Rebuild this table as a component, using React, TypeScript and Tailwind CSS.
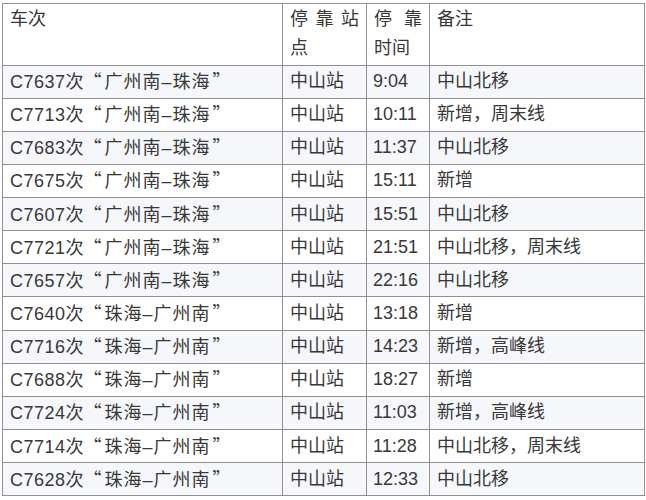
import React from "react";

const rows: [string, string, string, string][] = [
  ["C7637", "广州南–珠海", "9:04", "中山北移"],
  ["C7713", "广州南–珠海", "10:11", "新增，周末线"],
  ["C7683", "广州南–珠海", "11:37", "中山北移"],
  ["C7675", "广州南–珠海", "15:11", "新增"],
  ["C7607", "广州南–珠海", "15:51", "中山北移"],
  ["C7721", "广州南–珠海", "21:51", "中山北移，周末线"],
  ["C7657", "广州南–珠海", "22:16", "中山北移"],
  ["C7640", "珠海–广州南", "13:18", "新增"],
  ["C7716", "珠海–广州南", "14:23", "新增，高峰线"],
  ["C7688", "珠海–广州南", "18:27", "新增"],
  ["C7724", "珠海–广州南", "11:03", "新增，高峰线"],
  ["C7714", "珠海–广州南", "11:28", "中山北移，周末线"],
  ["C7628", "珠海–广州南", "12:33", "中山北移"],
];

const cjk = { fontFamily: '"Noto Sans CJK SC", sans-serif' };

export default function App() {
  return (
    <div
      className="w-[646px] h-[500px] bg-white pl-[2px] pt-[3px] text-[18px] text-[#383838]"
      style={{ fontFamily: '"Liberation Sans", "Noto Sans CJK SC", sans-serif' }}
    >
      <table className="table-fixed border-collapse w-[642px]">
        <colgroup>
          <col className="w-[280px]" />
          <col className="w-[84px]" />
          <col className="w-[63px]" />
          <col className="w-[215px]" />
        </colgroup>
        <thead>
          <tr className="h-[61.5px]">
            <th className="border border-[#8f8f8f] align-top text-left font-normal px-[7px] pt-[1px] leading-[29px]">
              车次
            </th>
            <th className="border border-[#8f8f8f] align-top text-justify font-normal px-[7px] pt-[1px] leading-[29px]">
              停靠站点
            </th>
            <th className="border border-[#8f8f8f] align-top text-justify font-normal px-[7px] pt-[1px] leading-[29px]">
              停靠时间
            </th>
            <th className="border border-[#8f8f8f] align-top text-left font-normal px-[7px] pt-[1px] leading-[29px]">
              备注
            </th>
          </tr>
        </thead>
        <tbody>
          {rows.map((r, i) => (
            <tr key={i} className={i % 2 === 0 ? "h-[33.15px] bg-[#f5f7fb]" : "h-[33.15px] bg-white"}>
              <td className="border border-[#8f8f8f] px-[7px] leading-[29px] whitespace-nowrap">
                <span className="tracking-[0.5px]">{r[0]}</span>次
                <span style={cjk} className="mr-[3px]">“</span>
                <span className="tracking-[1px]">{r[1]}</span>
                <span style={cjk} className="ml-[2px]">”</span>
              </td>
              <td className="border border-[#8f8f8f] px-[7px] leading-[29px]">中山站</td>
              <td className="border border-[#8f8f8f] px-[6px] leading-[29px]">{r[2]}</td>
              <td className="border border-[#8f8f8f] px-[7px] leading-[29px] whitespace-nowrap">{r[3]}</td>
            </tr>
          ))}
        </tbody>
      </table>
    </div>
  );
}
